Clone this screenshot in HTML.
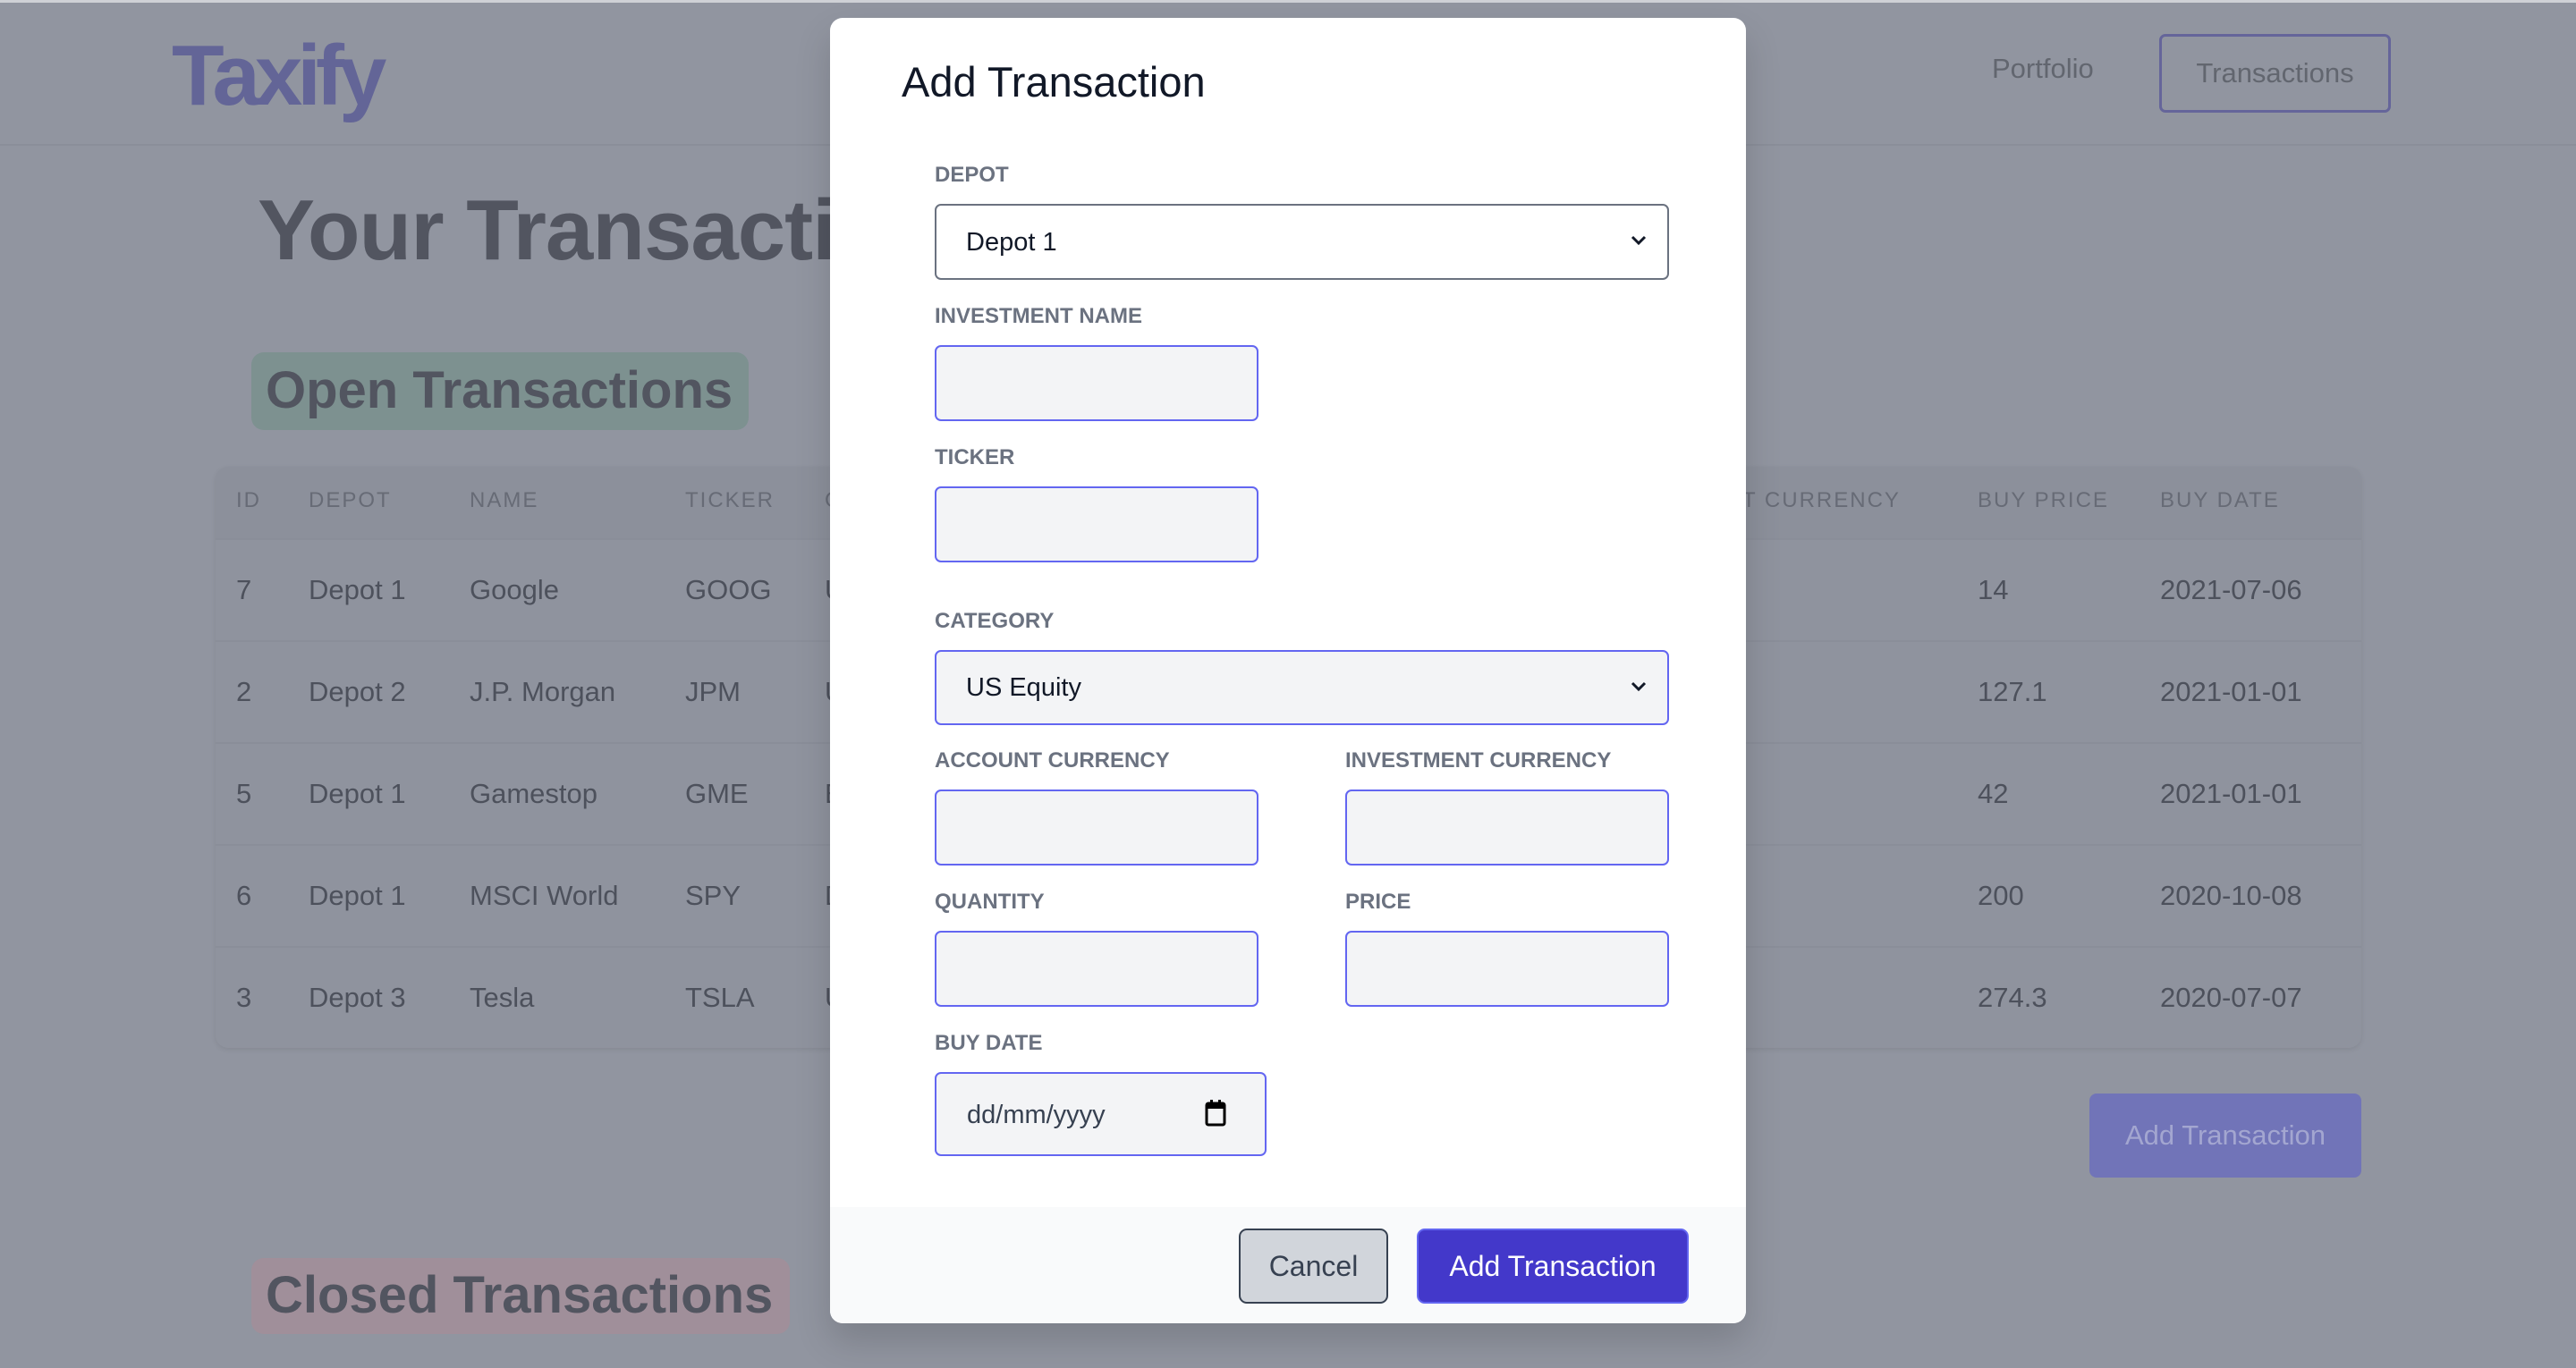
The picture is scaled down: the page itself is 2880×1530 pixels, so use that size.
<!DOCTYPE html>
<html><head><meta charset="utf-8"><style>
*{box-sizing:border-box;margin:0;padding:0}
body{width:2880px;height:1530px;overflow:hidden;background:#9195a0;font-family:"Liberation Sans",sans-serif;position:relative}
.a{position:absolute;white-space:nowrap}
.lbl{position:absolute;left:1045px;font-size:24px;font-weight:bold;color:#6b7280;line-height:24px}
.inp{position:absolute;background:#f3f4f6;border:2px solid #6366f1;border-radius:7px;height:85px}
.th{position:absolute;top:547px;font-size:24px;color:#676b76;letter-spacing:2px;line-height:26px}
.td{position:absolute;font-size:31px;color:#4d515c;line-height:34px}
.hr{position:absolute;left:241px;width:2399px;height:2px;background:#8a8e99}
</style></head><body>
<div class="a" style="left:0;top:0;width:2880px;height:3px;background:#cfd1d6"></div>
<div class="a" style="left:0;top:161px;width:2880px;height:2px;background:#8a8e99"></div>
<div class="a" style="left:192px;top:30px;font-size:96px;font-weight:bold;color:#636597;letter-spacing:-6px;line-height:110px">Taxify</div>
<div class="a" style="left:2227px;top:60px;font-size:31px;color:#62666f;line-height:34px">Portfolio</div>
<div class="a" style="left:2414px;top:38px;width:259px;height:88px;border:3px solid #65659a;border-radius:7px;font-size:31px;color:#62666f;text-align:center;line-height:82px">Transactions</div>
<div class="a" style="left:288px;top:208px;font-size:96px;font-weight:bold;color:#525560;line-height:100px;letter-spacing:-1px">Your Transactions</div>
<div class="a" style="left:281px;top:394px;width:556px;height:87px;background:#7d9190;border-radius:14px"></div>
<div class="a" style="left:297px;top:404px;font-size:58px;font-weight:bold;color:#525560;line-height:66px">Open Transactions</div>
<div class="a" style="left:241px;top:522px;width:2399px;height:650px;background:#8f939e;border-radius:14px;box-shadow:0 2px 6px rgba(0,0,0,.08)"></div>
<div class="a" style="left:241px;top:522px;width:2399px;height:81px;background:#8c909b;border-radius:14px 14px 0 0"></div>
<div class="th" style="left:264px">ID</div><div class="th" style="left:345px">DEPOT</div><div class="th" style="left:525px">NAME</div><div class="th" style="left:766px">TICKER</div><div class="th" style="left:922px">CATEGORY</div><div class="th" style="left:1790px">INVESTMENT CURRENCY</div><div class="th" style="left:2211px">BUY PRICE</div><div class="th" style="left:2415px">BUY DATE</div>
<div class="hr" style="top:602px"></div><div class="hr" style="top:716px"></div><div class="hr" style="top:830px"></div><div class="hr" style="top:944px"></div><div class="hr" style="top:1058px"></div>
<div class="td" style="left:264px;top:643px">7</div><div class="td" style="left:345px;top:643px">Depot 1</div><div class="td" style="left:525px;top:643px">Google</div><div class="td" style="left:766px;top:643px">GOOG</div><div class="td" style="left:922px;top:643px">US</div><div class="td" style="left:2211px;top:643px">14</div><div class="td" style="left:2415px;top:643px">2021-07-06</div>
<div class="td" style="left:264px;top:757px">2</div><div class="td" style="left:345px;top:757px">Depot 2</div><div class="td" style="left:525px;top:757px">J.P. Morgan</div><div class="td" style="left:766px;top:757px">JPM</div><div class="td" style="left:922px;top:757px">US</div><div class="td" style="left:2211px;top:757px">127.1</div><div class="td" style="left:2415px;top:757px">2021-01-01</div>
<div class="td" style="left:264px;top:871px">5</div><div class="td" style="left:345px;top:871px">Depot 1</div><div class="td" style="left:525px;top:871px">Gamestop</div><div class="td" style="left:766px;top:871px">GME</div><div class="td" style="left:922px;top:871px">EU</div><div class="td" style="left:2211px;top:871px">42</div><div class="td" style="left:2415px;top:871px">2021-01-01</div>
<div class="td" style="left:264px;top:985px">6</div><div class="td" style="left:345px;top:985px">Depot 1</div><div class="td" style="left:525px;top:985px">MSCI World</div><div class="td" style="left:766px;top:985px">SPY</div><div class="td" style="left:922px;top:985px">DE</div><div class="td" style="left:2211px;top:985px">200</div><div class="td" style="left:2415px;top:985px">2020-10-08</div>
<div class="td" style="left:264px;top:1099px">3</div><div class="td" style="left:345px;top:1099px">Depot 3</div><div class="td" style="left:525px;top:1099px">Tesla</div><div class="td" style="left:766px;top:1099px">TSLA</div><div class="td" style="left:922px;top:1099px">US</div><div class="td" style="left:2211px;top:1099px">274.3</div><div class="td" style="left:2415px;top:1099px">2020-07-07</div>
<div class="a" style="left:2336px;top:1223px;width:304px;height:94px;background:#7174b8;border-radius:8px;font-size:31px;color:#a3a6d0;text-align:center;line-height:94px">Add Transaction</div>
<div class="a" style="left:281px;top:1407px;width:602px;height:85px;background:#a08f9a;border-radius:14px"></div>
<div class="a" style="left:297px;top:1416px;font-size:58px;font-weight:bold;color:#525560;line-height:66px">Closed Transactions</div>

<div class="a" style="left:928px;top:20px;width:1024px;height:1460px;background:#fff;border-radius:14px;overflow:hidden;box-shadow:0 20px 40px rgba(0,0,0,.15)">
<div class="a" style="left:0;top:1330px;width:1024px;height:130px;background:#f9fafb"></div>
</div>
<div class="a" style="left:1008px;top:66px;font-size:47px;color:#111827;line-height:52px">Add Transaction</div>
<div class="lbl" style="top:184px">DEPOT</div>
<div class="a" style="left:1045px;top:228px;width:821px;height:85px;border:2px solid #6b7280;border-radius:7px;background:#fff"></div>
<div class="a" style="left:1080px;top:254px;font-size:29px;color:#111827;line-height:34px">Depot 1</div>
<svg class="a" style="left:1822px;top:262px" width="20" height="14" viewBox="0 0 20 14"><path d="M3 3 L10 10 L17 3" fill="none" stroke="#111827" stroke-width="3"/></svg>
<div class="lbl" style="top:342px">INVESTMENT NAME</div>
<div class="inp" style="left:1045px;top:386px;width:362px"></div>
<div class="lbl" style="top:500px">TICKER</div>
<div class="inp" style="left:1045px;top:544px;width:362px"></div>
<div class="lbl" style="top:683px">CATEGORY</div>
<div class="inp" style="left:1045px;top:727px;width:821px;height:84px"></div>
<div class="a" style="left:1080px;top:752px;font-size:29px;color:#111827;line-height:34px">US Equity</div>
<svg class="a" style="left:1822px;top:761px" width="20" height="14" viewBox="0 0 20 14"><path d="M3 3 L10 10 L17 3" fill="none" stroke="#111827" stroke-width="3"/></svg>
<div class="lbl" style="top:839px">ACCOUNT CURRENCY</div>
<div class="lbl" style="top:839px;left:1504px">INVESTMENT CURRENCY</div>
<div class="inp" style="left:1045px;top:883px;width:362px"></div>
<div class="inp" style="left:1504px;top:883px;width:362px"></div>
<div class="lbl" style="top:997px">QUANTITY</div>
<div class="lbl" style="top:997px;left:1504px">PRICE</div>
<div class="inp" style="left:1045px;top:1041px;width:362px"></div>
<div class="inp" style="left:1504px;top:1041px;width:362px"></div>
<div class="lbl" style="top:1155px">BUY DATE</div>
<div class="inp" style="left:1045px;top:1199px;width:371px;height:94px"></div>
<div class="a" style="left:1081px;top:1230px;font-size:29px;color:#374151;line-height:34px">dd/mm/yyyy</div>
<svg class="a" style="left:1346px;top:1230px" width="26" height="30" viewBox="0 0 26 30"><rect x="3" y="4" width="20" height="24" rx="2" fill="none" stroke="#000" stroke-width="3"/><rect x="3" y="4" width="20" height="6" fill="#000"/><rect x="7" y="0" width="3" height="6" fill="#000"/><rect x="16" y="0" width="3" height="6" fill="#000"/></svg>
<div class="a" style="left:1385px;top:1374px;width:167px;height:84px;background:#d1d5db;border:2px solid #374151;border-radius:9px;font-size:32px;color:#374151;text-align:center;line-height:80px">Cancel</div>
<div class="a" style="left:1584px;top:1374px;width:304px;height:84px;background:#4338ca;border:2px solid #6366f1;border-radius:9px;font-size:32px;color:#fff;text-align:center;line-height:80px">Add Transaction</div>
</body></html>
